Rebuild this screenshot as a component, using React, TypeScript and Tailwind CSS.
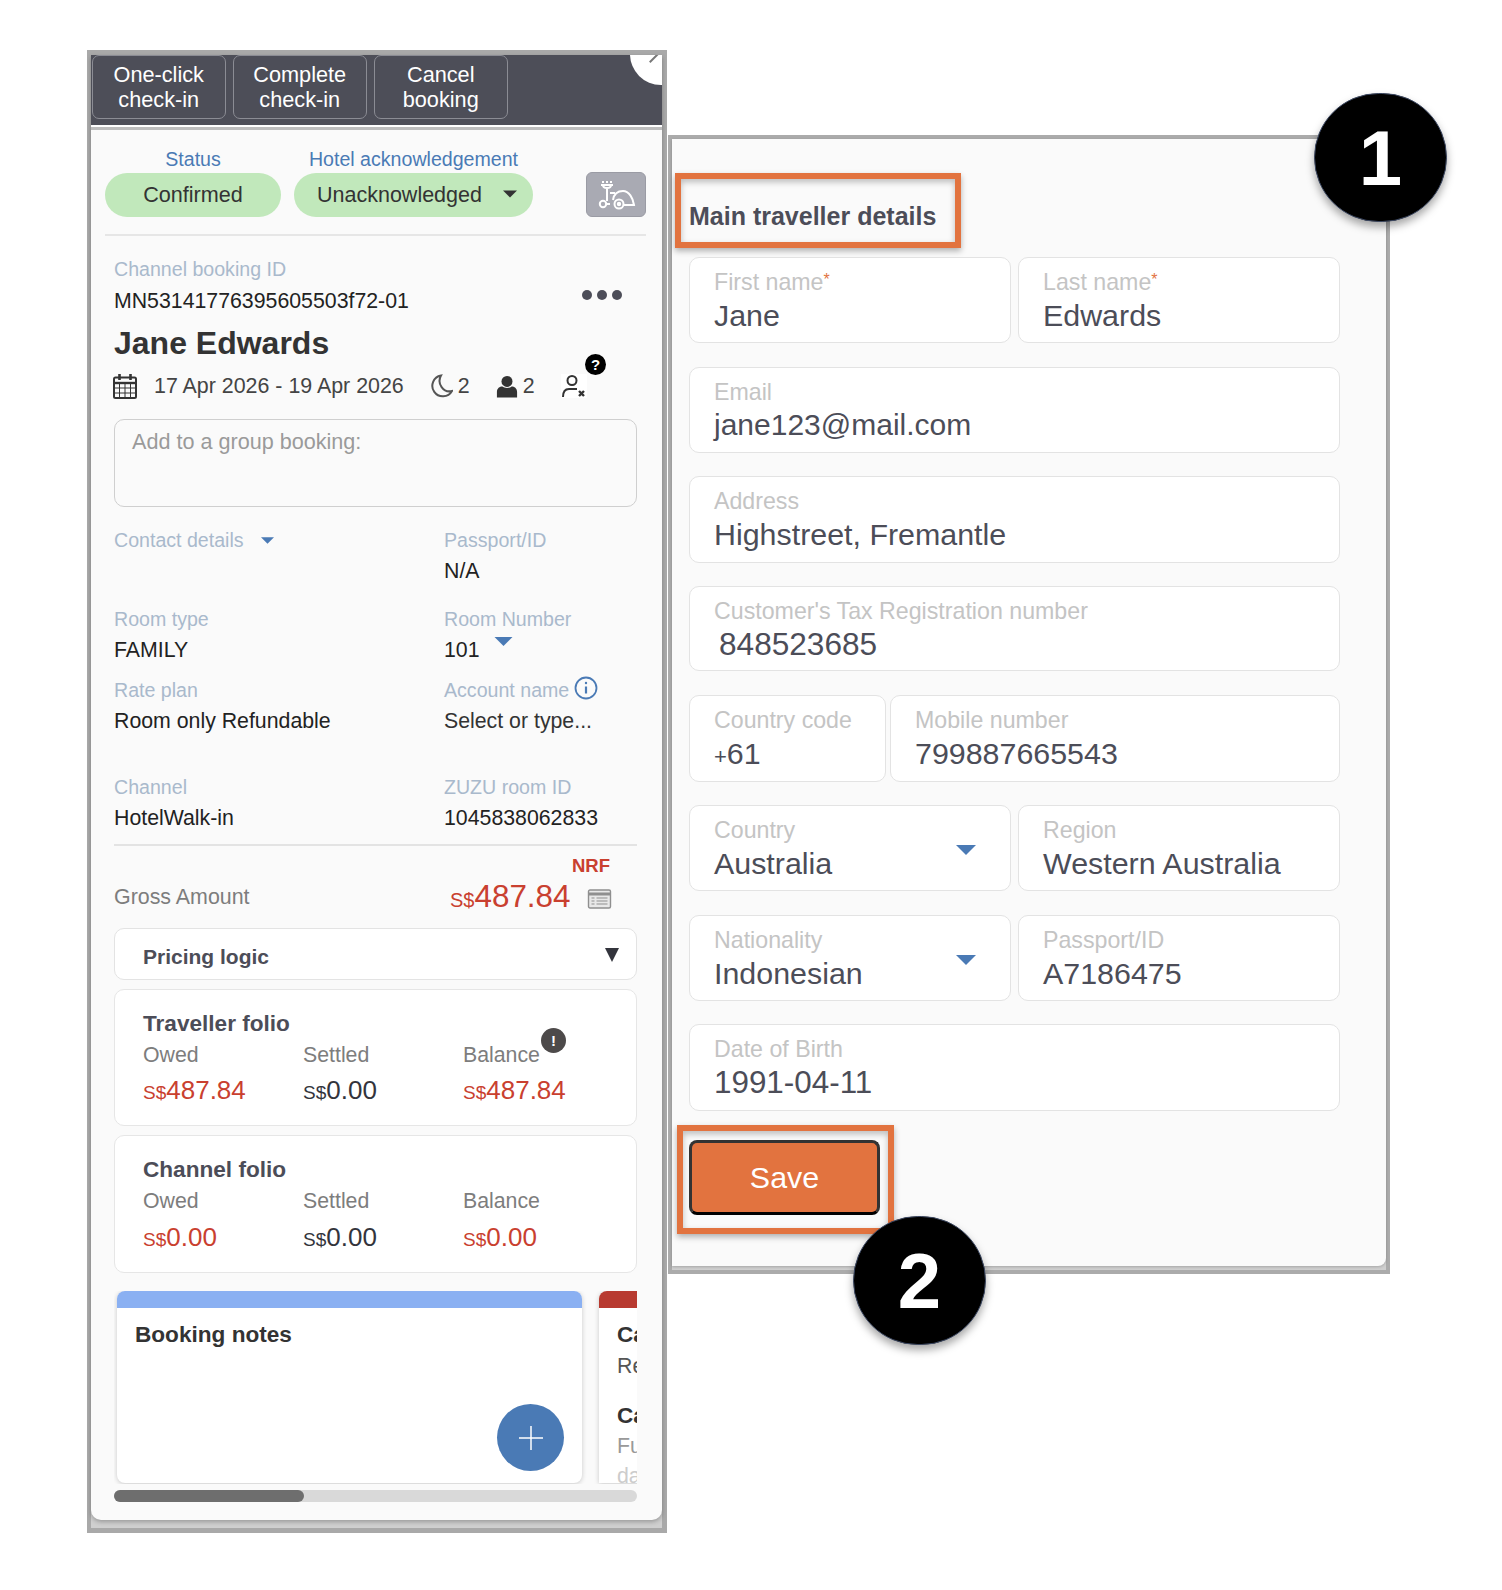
import React from "react";

const FONT = "font-['Liberation_Sans',Arial,sans-serif]";

function Caret({ className }: { className: string }) {
  return (
    <svg viewBox="0 0 20 10" className={className} fill="currentColor">
      <path d="M0 0h20L10 10z" />
    </svg>
  );
}

function Field({ label, value, req, caret, className, valueClass = "text-[30.4px]" }: { label: string; value: React.ReactNode; req?: boolean; caret?: boolean; className: string; valueClass?: string }) {
  return (
    <div className={`relative h-full rounded-[10px] border border-[#e3e3e3] bg-white pl-[24px] pt-[11px] ${className}`}>
      <div className="h-[27px] text-[23.2px] leading-[27px] text-[#c4c4c4]">
        {label}
        {req && <span className="relative top-[-5px] text-[16px] text-[#e2733f]">*</span>}
      </div>
      <div className={`mt-[1px] h-[36px] leading-[36px] text-[#4c4d58] ${valueClass}`}>{value}</div>
      {caret && <Caret className="absolute right-[34px] top-[39px] h-[10px] w-[20px] text-[#4a7ab5]" />}
    </div>
  );
}

function Meta({ label, children, className = "" }: { label: string; children?: React.ReactNode; className?: string }) {
  return (
    <div className={className}>
      <div className="flex h-[24px] items-center text-[19.6px] leading-[24px] text-[#a9b9cc]">{label}{children}</div>
    </div>
  );
}

function Money({ value, red, big }: { value: string; red?: boolean; big?: boolean }) {
  return (
    <span className={`${red ? "text-[#c9402f]" : "text-[#33343c]"} ${big ? "text-[31.4px]" : "text-[26px]"} leading-none`}>
      <span className={big ? "text-[20px]" : "text-[19px]"}>S$</span>
      {value}
    </span>
  );
}

function Folio({ title, owed, settled, balance, alert, className, amountClass }: { title: string; owed: string; settled: string; balance: string; alert?: boolean; className: string; amountClass: string }) {
  return (
    <div className={`relative rounded-[10px] border border-[#e6e6e6] bg-white pl-[28px] pt-[20px] ${className}`}>
      <div className="h-[28px] text-[22.6px] font-bold leading-[28px] text-[#4c4d58]">{title}</div>
      <div className="mt-[3px] grid grid-cols-[160px_160px_1fr] text-[21.3px] leading-[28px] text-[#7d7d7d]">
        <span>Owed</span><span>Settled</span><span>Balance</span>
      </div>
      <div className={`grid grid-cols-[160px_160px_1fr] ${amountClass}`}>
        <Money value={owed} red /><Money value={settled} /><Money value={balance} red />
      </div>
      {alert && (
        <div className="absolute left-[426px] top-[38px] flex h-[25px] w-[25px] items-center justify-center rounded-full bg-[#4d4a4a] text-[15px] font-bold leading-none text-white">!</div>
      )}
    </div>
  );
}

function Numbered({ n, className }: { n: string; className: string }) {
  return (
    <div className={`absolute z-20 flex items-center justify-center rounded-full border border-[#3a4660] bg-black text-[78px] font-bold leading-none text-white shadow-[0_5px_8px_rgba(0,0,0,0.35)] ${className}`}>
      {n}
    </div>
  );
}

export default function App() {
  return (
    <div className={`${FONT} relative flex h-[1590px] w-[1502px] items-start overflow-hidden bg-white pl-[87px] pt-[50px]`}>
      {/* Left panel */}
      <div className="relative h-[1483px] w-[580px] shrink-0 border-[5px] border-l-[4px] border-[#a9a9a9] bg-[#cfcfcf]">
        <div className="flex h-[calc(100%-8px)] flex-col rounded-b-[10px] bg-[#fafafa] shadow-[0_2px_4px_rgba(0,0,0,0.25)]">
          <div className="relative h-[70px] shrink-0 overflow-hidden bg-[#4d4e58]">
            <div className="flex gap-[7.5px] pl-[1px]">
              {[["One-click", "check-in"], ["Complete", "check-in"], ["Cancel", "booking"]].map(([a, b]) => (
                <div key={a} className="flex h-[64px] w-[133.5px] flex-col items-center justify-center rounded-[7px] border border-[#8b8c94] text-[21.7px] leading-[25px] text-white">
                  <span>{a}</span>
                  <span>{b}</span>
                </div>
              ))}
            </div>
            <div className="absolute right-[-30px] top-[-32px] h-[62px] w-[62px] rounded-full bg-white" />
            <div className="absolute right-[2px] top-[2px] h-[2px] w-[12px] -rotate-45 bg-[#777]" />
          </div>
          <div className="h-[2px] shrink-0 bg-white" />
          <div className="h-[3px] shrink-0 bg-[#bdbdbd]" />

          <div className="px-[14px]">
            {/* status row */}
            <div className="mt-[17px] flex h-[71px]">
              <div className="w-[176px] shrink-0">
                <div className="h-[24px] text-center text-[19.6px] leading-[24px] text-[#4a7ab5]">Status</div>
                <div className="mt-[2px] flex h-[44px] items-center justify-center rounded-full bg-[#c1e8bb] pt-[1px] text-[21.6px] text-[#333]">Confirmed</div>
              </div>
              <div className="ml-[13px] w-[239px] shrink-0">
                <div className="h-[24px] text-center text-[19.6px] leading-[24px] text-[#4a7ab5]">Hotel acknowledgement</div>
                <div className="relative mt-[2px] flex h-[44px] items-center rounded-full bg-[#c1e8bb] pl-[23px] pt-[1px] text-[21.5px] text-[#333]">
                  Unacknowledged
                  <Caret className="absolute right-[16px] top-[17px] h-[8px] w-[14px] text-[#333]" />
                </div>
              </div>
              <div className="ml-[53px] mt-[25px] flex h-[45px] w-[60px] items-center justify-center rounded-[6px] border border-[#9a9ba4] bg-[#a9aab3]">
                <svg viewBox="0 0 40 30" className="h-[32px] w-[40px]" fill="none" stroke="#fff" strokeWidth="2">
                  <path d="M6 2h2M10 2h2M14 2h2M5 5h12M7 5c0 4 8 4 8 0M11 9v12" />
                  <circle cx="7" cy="24" r="3.2" />
                  <path d="M10 24h4" />
                  <path d="M17 20c1-6 5-9 10-9 6 0 10 7 11 14H28" />
                  <path d="M14 13h5" />
                  <circle cx="23" cy="24" r="4.5" />
                  <circle cx="23" cy="24" r="1.2" fill="#fff" />
                </svg>
              </div>
            </div>
            <div className="mt-[16px] h-[2px] w-[541px] bg-[#e6e6e6]" />

            <div className="pl-[9px]">
              <div className="mt-[21px] h-[24px] text-[19.6px] leading-[24px] text-[#a9b9cc]">Channel booking ID</div>
              <div className="mt-[8px] flex h-[24px] items-center justify-between pr-[26px] text-[21.3px] leading-[24px] text-[#222]">
                <span>MN53141776395605503f72-01</span>
                <span className="mb-[12px] flex gap-[5px]">
                  <i className="h-[10px] w-[10px] rounded-full bg-[#4c4d58]" />
                  <i className="h-[10px] w-[10px] rounded-full bg-[#4c4d58]" />
                  <i className="h-[10px] w-[10px] rounded-full bg-[#4c4d58]" />
                </span>
              </div>
              <div className="mt-[11px] h-[38px] text-[32px] font-bold leading-[38px] text-[#333]">Jane Edwards</div>

              <div className="relative mt-[10px] flex h-[28px] items-center text-[21.4px] text-[#444]">
                <svg viewBox="0 0 24 26" className="ml-[-1px] h-[26px] w-[24px]" fill="none" stroke="#333" strokeWidth="2">
                  <rect x="1" y="4.5" width="22" height="20.5" rx="1.5" />
                  <path d="M1 10h22" strokeWidth="2.4" />
                  <path d="M1 15h22M1 20h22M6.5 10v15M12 10v15M17.5 10v15" strokeWidth="1" />
                  <path d="M6.5 1v6M17.5 1v6" strokeWidth="2.6" />
                </svg>
                <span className="ml-[17px]">17 Apr 2026 - 19 Apr 2026</span>
                <svg viewBox="0 0 24 24" className="ml-[25px] h-[24px] w-[24px]" fill="none" stroke="#555" strokeWidth="2">
                  <path d="M12 1.5A10.5 10.5 0 1 0 23 17 10 10.5 0 0 1 12 1.5z" />
                </svg>
                <span className="ml-[5px]">2</span>
                <svg viewBox="0 0 24 24" className="ml-[26px] h-[23px] w-[22px]" fill="#333">
                  <circle cx="12" cy="6.5" r="6" />
                  <path d="M1 24v-6c0-4 3-6 6-6 2 2 8 2 10 0 3 0 6 2 6 6v6z" />
                </svg>
                <span className="ml-[5px]">2</span>
                <svg viewBox="0 0 26 24" className="ml-[26px] h-[24px] w-[26px] bg-white" fill="none" stroke="#333" strokeWidth="2">
                  <circle cx="11" cy="6.5" r="4.5" />
                  <path d="M2 23c0-6 2-8 6-8h8" />
                  <path d="M18 17l5 5M23 17l-5 5" strokeWidth="2.4" />
                </svg>
                <div className="absolute left-[471px] top-[-18px] flex h-[21px] w-[21px] items-center justify-center rounded-full bg-black text-[15px] font-bold leading-none text-white">?</div>
              </div>

              <div className="mt-[19px] h-[88px] w-[523px] rounded-[10px] border border-[#cfcfcf] pl-[17px] pt-[9px] text-[21.6px] leading-[26px] text-[#9a9a9a]">
                Add to a group booking:
              </div>

              <div className="grid grid-cols-[330px_1fr]">
                <Meta label="Contact details" className="mt-[21px]">
                  <Caret className="ml-[17px] h-[7px] w-[13px] text-[#4a7ab5]" />
                </Meta>
                <Meta label="Passport/ID" className="mt-[21px]" />
                <div className="h-[24px]" />
                <div className="mt-[7px] h-[24px] text-[21.3px] leading-[24px] text-[#222]">N/A</div>

                <Meta label="Room type" className="mt-[24px]" />
                <Meta label="Room Number" className="mt-[24px]" />
                <div className="mt-[7px] h-[24px] text-[21.3px] leading-[24px] text-[#222]">FAMILY</div>
                <div className="mt-[7px] flex h-[24px] text-[21.3px] leading-[24px] text-[#222]">
                  101
                  <Caret className="ml-[14px] mt-[-1px] h-[9px] w-[19px] text-[#4a7ab5]" />
                </div>

                <Meta label="Rate plan" className="mt-[16px]" />
                <Meta label="Account name" className="mt-[16px]">
                  <svg viewBox="0 0 24 24" className="ml-[5px] mt-[-4px] h-[24px] w-[24px]" fill="none" stroke="#4a7ab5" strokeWidth="1.8">
                    <circle cx="12" cy="12" r="10.5" />
                    <path d="M12 10.5v7" strokeWidth="2.2" />
                    <circle cx="12" cy="7" r="1.2" fill="#4a7ab5" stroke="none" />
                  </svg>
                </Meta>
                <div className="mt-[7px] h-[24px] text-[21.3px] leading-[24px] text-[#222]">Room only Refundable</div>
                <div className="mt-[7px] h-[24px] text-[21.3px] leading-[24px] text-[#333]">Select or type...</div>

                <Meta label="Channel" className="mt-[42px]" />
                <Meta label="ZUZU room ID" className="mt-[42px]" />
                <div className="mt-[7px] h-[24px] text-[21.3px] leading-[24px] text-[#222]">HotelWalk-in</div>
                <div className="mt-[7px] h-[24px] text-[21.3px] leading-[24px] text-[#222]">1045838062833</div>
              </div>

              <div className="mt-[14px] h-[2px] w-[523px] bg-[#e3e3e3]" />
              <div className="mt-[8px] h-[24px] w-[496px] text-right text-[18.5px] font-bold leading-[24px] text-[#c9402f]">NRF</div>
              <div className="mt-[1px] flex h-[36px] w-[523px] items-center text-[21.4px] text-[#7d7d7d]">
                <span className="w-[336px]">Gross Amount</span>
                <Money value="487.84" red big />
                <svg viewBox="0 0 24 20" className="ml-[17px] mt-[4px] h-[20px] w-[25px]" fill="none" stroke="#8f8f8f" strokeWidth="1.4">
                  <rect x="1" y="1" width="22" height="18" rx="1.5" fill="#e8e8e8" />
                  <path d="M1 5h22" strokeWidth="3" />
                  <path d="M4 9h3M9 9h11M4 12h3M9 12h11M4 15h3M9 15h11" strokeWidth="1" />
                </svg>
              </div>
              <div className="relative mt-[13px] flex h-[52px] w-[523px] items-center rounded-[10px] border border-[#e3e3e3] bg-white pl-[28px] pt-[5px] text-[21px] font-bold text-[#4c4d58]">
                Pricing logic
                <svg viewBox="0 0 14 14" className="absolute right-[17px] top-[19px] h-[14px] w-[14px]" fill="#33343c">
                  <path d="M0 0h14L7 14z" />
                </svg>
              </div>
              <Folio className="mt-[9px] h-[137px] w-[523px]" amountClass="mt-[8px]" title="Traveller folio" owed="487.84" settled="0.00" balance="487.84" alert />
              <Folio className="mt-[9px] h-[138px] w-[523px]" amountClass="mt-[9px]" title="Channel folio" owed="0.00" settled="0.00" balance="0.00" />

              <div className="mt-[18px] flex h-[193px] w-[523px] gap-[17px] overflow-hidden pl-[3px]">
                <div className="relative h-[192px] w-[465px] shrink-0 overflow-hidden rounded-[8px] bg-white shadow-[0_1px_5px_rgba(0,0,0,0.2)]">
                  <div className="h-[17px] bg-[#8ab0f2]" />
                  <div className="ml-[18px] mt-[13px] text-[22.6px] font-bold leading-[28px] text-[#333]">Booking notes</div>
                  <div className="absolute bottom-[12px] right-[18px] flex h-[67px] w-[67px] items-center justify-center rounded-full bg-[#4a7ab5]">
                    <svg viewBox="0 0 24 24" className="h-[24px] w-[24px]" stroke="#fff" strokeWidth="1.5"><path d="M12 0v24M0 12h24" /></svg>
                  </div>
                </div>
                <div className="h-[192px] w-[200px] shrink-0 overflow-hidden rounded-t-[8px] bg-white shadow-[0_1px_5px_rgba(0,0,0,0.2)]">
                  <div className="h-[17px] bg-[#b83a30]" />
                  <div className="ml-[18px] mt-[13px] text-[22.6px] font-bold leading-[28px] text-[#333]">Cancellation</div>
                  <div className="ml-[18px] mt-[3px] text-[21.3px] leading-[28px] text-[#555]">Refundable</div>
                  <div className="ml-[18px] mt-[22px] text-[22.6px] font-bold leading-[28px] text-[#333]">Cancel</div>
                  <div className="ml-[18px] mt-[2px] text-[21.3px] leading-[28px] text-[#999]">Full</div>
                  <div className="ml-[18px] mt-[2px] text-[21.3px] leading-[28px] text-[#ccc]">date</div>
                </div>
              </div>
              <div className="mt-[6px] h-[12px] w-[523px] rounded-full bg-[#d9d9d9]">
                <div className="h-[12px] w-[190px] rounded-full bg-[#6e6e6e]" />
              </div>
            </div>
          </div>
        </div>
      </div>

      {/* Right panel */}
      <div className="relative ml-[1px] mt-[85px] h-[1139px] w-[722px] shrink-0 border-[4px] border-[#ababab] bg-[#cfcfcf]">
        <div className="h-[calc(100%-4px)] rounded-br-[8px] bg-[#fafafa] pl-[17px] pt-[61px] shadow-[0_1px_3px_rgba(0,0,0,0.2)]">
          <div className="h-[32px] text-[25px] font-bold leading-[32px] text-[#4c4d58]">Main traveller details</div>
          <div className="mt-[25px] flex h-[86px] w-[651px] gap-[7px]">
            <Field className="w-[322px]" label="First name" value="Jane" req />
            <Field className="w-[322px]" label="Last name" value="Edwards" req />
          </div>
          <div className="mt-[24px] h-[86px] w-[651px]"><Field className="w-full" label="Email" value="jane123@mail.com" valueClass="text-[30px]" /></div>
          <div className="mt-[23px] h-[87px] w-[651px]"><Field className="w-full" label="Address" value="Highstreet, Fremantle" /></div>
          <div className="mt-[23px] h-[85px] w-[651px]"><Field className="w-full" label="Customer's Tax Registration number" value="848523685" valueClass="pl-[5px] text-[31.6px]" /></div>
          <div className="mt-[24px] flex h-[87px] w-[651px] gap-[4px]">
            <Field className="w-[197px]" label="Country code" value={<><span className="text-[22px]">+</span>61</>} />
            <Field className="flex-1" label="Mobile number" value="799887665543" />
          </div>
          <div className="mt-[23px] flex h-[86px] w-[651px] gap-[7px]">
            <Field className="w-[322px]" label="Country" value="Australia" caret />
            <Field className="w-[322px]" label="Region" value="Western Australia" />
          </div>
          <div className="mt-[24px] flex h-[86px] w-[651px] gap-[7px]">
            <Field className="w-[322px]" label="Nationality" value="Indonesian" caret />
            <Field className="w-[322px]" label="Passport/ID" value="A7186475" />
          </div>
          <div className="mt-[23px] h-[87px] w-[651px]"><Field className="w-full" label="Date of Birth" value="1991-04-11" valueClass="pt-[1px] text-[31.4px]" /></div>
          <div className="mt-[29px] flex h-[75px] w-[191px] items-center justify-center rounded-[8px] border-[3px] border-[#333] border-b-black bg-[#e2733f] text-[30.4px] text-white">Save</div>
        </div>
      </div>

      {/* Annotations */}
      <div className="pointer-events-none absolute left-[675px] top-[173px] z-10 h-[75px] w-[286px] border-[6px] border-[#e2733f] shadow-[0_3px_6px_rgba(0,0,0,0.3),inset_0_3px_6px_rgba(0,0,0,0.25)]" />
      <div className="pointer-events-none absolute left-[677px] top-[1125px] z-10 h-[109px] w-[217px] border-[6px] border-[#e2733f] shadow-[0_3px_6px_rgba(0,0,0,0.3),inset_0_3px_6px_rgba(0,0,0,0.25)]" />
      <Numbered n="1" className="left-[1314px] top-[93px] h-[129px] w-[133px]" />
      <Numbered n="2" className="left-[853px] top-[1216px] h-[129px] w-[133px]" />
    </div>
  );
}
